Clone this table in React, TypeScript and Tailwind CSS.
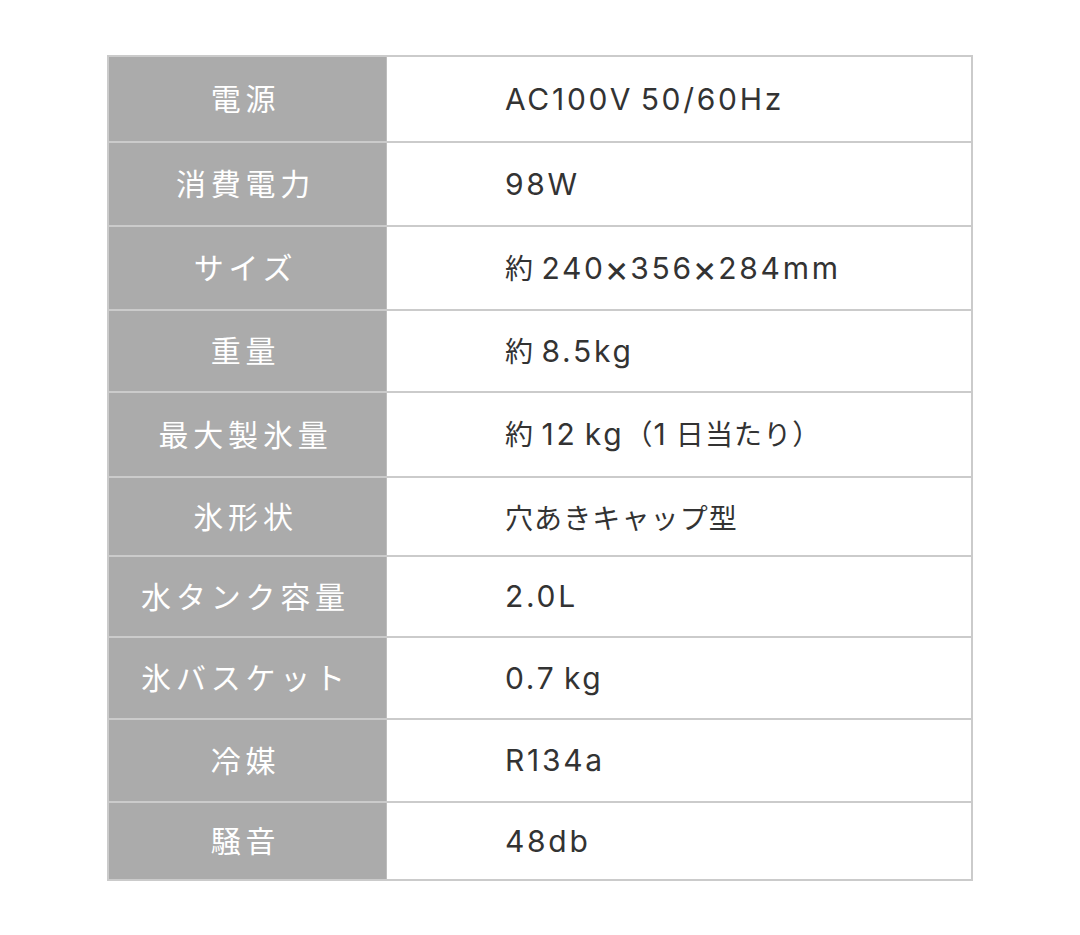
import React from "react";

const rows: { label: string; value: string; h: string }[] = [
  { label: "電源", value: "AC100V 50/60Hz", h: "h-[84px]" },
  { label: "消費電力", value: "98W", h: "h-[84px] border-t-2" },
  { label: "サイズ", value: "約 240×356×284mm", h: "h-[84px] border-t-2" },
  { label: "重量", value: "約 8.5kg", h: "h-[82px] border-t-2" },
  { label: "最大製氷量", value: "約 12 kg（1 日当たり）", h: "h-[85px] border-t-2" },
  { label: "氷形状", value: "穴あきキャップ型", h: "h-[79px] border-t-2" },
  { label: "水タンク容量", value: "2.0L", h: "h-[81px] border-t-2" },
  { label: "氷バスケット", value: "0.7 kg", h: "h-[82px] border-t-2" },
  { label: "冷媒", value: "R134a", h: "h-[83px] border-t-2" },
  { label: "騒音", value: "48db", h: "h-[78px] border-t-2" },
];

function Value({ text }: { text: string }) {
  const parts = text.split(/([\x21-\x7e×]+)/);
  return (
    <>
      {parts.map((p, i) =>
        /[\x21-\x7e×]/.test(p) ? (
          <span
            key={i}
            className="font-['Inter','Noto_Sans_CJK_JP',sans-serif] text-[30px] tracking-[0.09em]"
          >
            {p.split(/(×)/).map((q, j) =>
              q === "×" ? (
                <span key={j} className="inline-block scale-[1.25] px-[1px]">
                  ×
                </span>
              ) : (
                q
              )
            )}
          </span>
        ) : (
          <span key={i} className="whitespace-pre">
            {p}
          </span>
        )
      )}
    </>
  );
}

export default function App() {
  return (
    <div className="min-h-[935px] w-[1080px] bg-white pt-[55px] pl-[107px] font-['Noto_Sans_CJK_JP','Noto_Sans',sans-serif]">
      <div className="w-[866px] border-2 border-[#cbcbcb]">
        {rows.map((r, i) => (
          <div key={i} className={`flex border-[#cbcbcb] ${r.h}`}>
            <div className="flex w-[278px] shrink-0 items-center justify-center border-r border-[#bdbdbd] bg-[#ababab] pb-[3px] pr-[4px] text-[30px] tracking-[0.16em] text-white">
              {r.label}
            </div>
            <div className="flex flex-1 items-center pl-[118px] text-[28px] tracking-[0.04em] text-[#333333]">
              <div>
                <Value text={r.value} />
              </div>
            </div>
          </div>
        ))}
      </div>
    </div>
  );
}
